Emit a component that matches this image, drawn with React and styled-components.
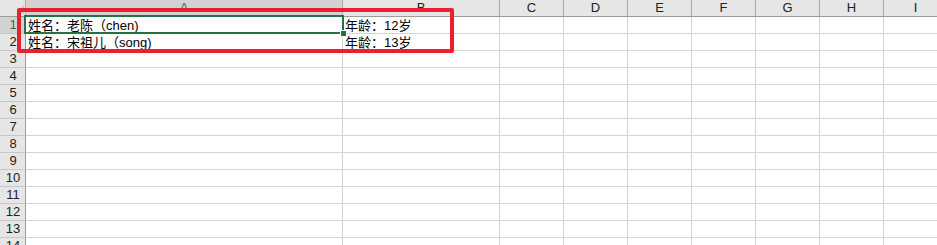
import React from "react";
import styled, { createGlobalStyle } from "styled-components";

const Global = createGlobalStyle`
  html, body { margin: 0; padding: 0; background: #ffffff; }
  body { width: 937px; height: 245px; overflow: hidden; }
`;

const Sheet = styled.div`
  position: relative;
  width: 937px;
  height: 245px;
  overflow: hidden;
  background: #fff;
  font-family: "Liberation Sans", "Noto Sans CJK SC", Arial, sans-serif;
`;

const Grid = styled.div`
  display: grid;
  grid-template-columns: 26px 317px 157px repeat(7, 64px);
  grid-template-rows: 17px repeat(14, 17px);
`;

const Corner = styled.div`
  background: #e6e6e6;
  border-right: 1px solid #ababab;
  border-bottom: 1px solid #9b9b9b;
  box-sizing: border-box;
  display: flex;
  align-items: flex-end;
  justify-content: flex-end;
  padding: 0 1px 2px 0;
`;

const ColHead = styled.div`
  box-sizing: border-box;
  background: ${(p) => (p.$active ? "#d2d2d2" : "#e6e6e6")};
  border-right: 1px solid #ababab;
  border-bottom: 1px solid ${(p) => (p.$active ? "#217346" : "#9b9b9b")};
  color: ${(p) => (p.$active ? "#217346" : "#222")};
  font-family: "Liberation Sans", Arial, sans-serif;
  font-size: 13px;
  line-height: 16px;
  text-align: center;
`;

const RowHead = styled.div`
  box-sizing: border-box;
  background: ${(p) => (p.$active ? "#d2d2d2" : "#e6e6e6")};
  border-right: 1px solid ${(p) => (p.$active ? "#217346" : "#9b9b9b")};
  border-bottom: 1px solid #c8c8c8;
  color: ${(p) => (p.$active ? "#217346" : "#222")};
  font-family: "Liberation Sans", Arial, sans-serif;
  font-size: 13px;
  line-height: 16px;
  text-align: center;
  padding-left: 1px;
`;

const Cell = styled.div`
  box-sizing: border-box;
  border-right: 1px solid #d4d4d4;
  border-bottom: 1px solid #d4d4d4;
  font-size: 13px;
  line-height: 17px;
  color: #000;
  padding-left: 2px;
  white-space: nowrap;
  overflow: visible;
`;

const Selection = styled.div`
  position: absolute;
  left: 24px;
  top: 15px;
  width: 320px;
  height: 19px;
  box-sizing: border-box;
  border: 2px solid #217346;
  pointer-events: none;
`;

const Handle = styled.div`
  position: absolute;
  right: -4px;
  bottom: -4px;
  width: 5px;
  height: 5px;
  background: #217346;
  outline: 1px solid #fff;
`;

const Highlight = styled.div`
  position: absolute;
  left: 17px;
  top: 8px;
  width: 437px;
  height: 45px;
  box-sizing: border-box;
  border: 4px solid #e8212c;
  border-radius: 2px;
  pointer-events: none;
`;

const cols = ["A", "B", "C", "D", "E", "F", "G", "H", "I"];
const data = {
  1: ["姓名：老陈（chen)", "年龄：12岁"],
  2: ["姓名：宋祖儿（song)", "年龄：13岁"],
};

export default function App() {
  const rows = Array.from({ length: 14 }, (_, i) => i + 1);
  return (
    <>
      <Global />
      <Sheet>
        <Grid>
          <Corner>
            <svg width="8" height="9" viewBox="0 0 8 9">
              <polygon points="8,0 8,9 0,9" fill="#c9c9c9" />
            </svg>
          </Corner>
          {cols.map((c) => (
            <ColHead key={c} $active={c === "A"}>
              {c}
            </ColHead>
          ))}
          {rows.map((r) => (
            <React.Fragment key={r}>
              <RowHead $active={r === 1}>{r}</RowHead>
              {cols.map((c, ci) => (
                <Cell key={c}>{data[r] && data[r][ci] ? data[r][ci] : ""}</Cell>
              ))}
            </React.Fragment>
          ))}
        </Grid>
        <Selection>
          <Handle />
        </Selection>
        <Highlight />
      </Sheet>
    </>
  );
}
